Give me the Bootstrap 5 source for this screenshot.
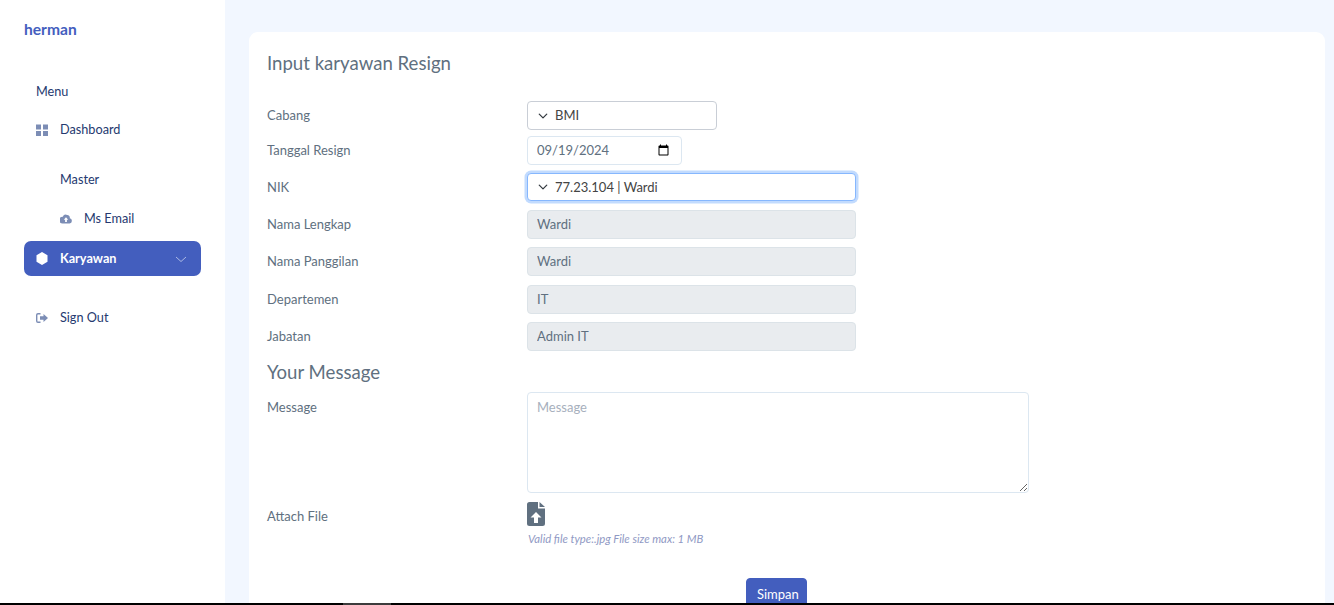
<!DOCTYPE html>
<html lang="en">
<head>
<meta charset="utf-8">
<title>Input karyawan Resign</title>
<link href="https://cdn.jsdelivr.net/npm/bootstrap@5.3.0/dist/css/bootstrap.min.css" rel="stylesheet">
<style>
html,body{height:605px;overflow:hidden}
body{background:#f2f7ff;font-family:"Lato","Open Sans",sans-serif;font-size:13px;color:#607080}
.app-shell{height:605px;overflow:hidden}
.side-panel{width:225px;flex:none;background:#fff;padding:20px 24px 0;height:605px}
.brand-name{font-size:15.6px;font-weight:700;color:#435ebe;line-height:18px;margin-bottom:45px}
.menu-title,.menu-link{color:#25396f;font-size:12.7px;line-height:17px}
.menu-title{padding-left:12px;margin-bottom:21px}
.menu-link{display:flex;align-items:center;gap:12px;padding-left:12px;text-decoration:none;height:17px}
.menu-link svg{width:12px;height:12px;flex:none;fill:#7c8db5}
.gap-dash{margin-bottom:33px}
.menu-sub{padding-left:36px;margin-bottom:22px}
.menu-sub.deep{padding-left:36px;margin-bottom:14px}
.menu-active{height:35px;background:#435ebe;color:#fff;border-radius:7px;font-weight:700;margin-bottom:33px;padding-right:14px}
.menu-active svg{fill:#fff;height:13px}
.menu-active .chev{margin-left:auto;fill:none;stroke:#c7d0ee;stroke-width:.8;width:12px;height:12px}
.work-area{flex:1;padding:32px 9px 0 24px;min-width:0}
.form-panel{background:#fff;border-radius:9px;padding:19px 18px 0;height:640px}
.panel-heading{font-size:18.6px;font-weight:400;color:#607080;line-height:25px;margin:0}
.top-gap{margin-top:25px}
.field-row{margin-bottom:8px}
.field-row.tight{margin-bottom:6px}
.field-row.gap-nine{margin-bottom:9px}
.field-label{line-height:29px;font-size:13px;color:#607080}
.label-low{padding-top:1px}
.field-col{padding-right:18px}
.form-control,.form-select{font-size:13px;color:#607080;height:29px;min-height:0;padding:4px 9px;border:1px solid #dce7f1;border-radius:4px;box-shadow:none}
.form-control:disabled{background:#e9ecef;border-color:#dce3e8;color:#607080;opacity:1;padding:3px 9px 5px}
.form-select{color:#444;padding-left:27px;background-position:left 9px center;background-size:12px 10px;border-color:#c9ced6}
.pick-branch{width:190px}
.pick-date{width:155px;padding-right:9px}
.pick-focus,.pick-focus:focus{border-color:#86b7fe;box-shadow:0 0 0 2.5px #c2dbfe;height:28px}
.heading-two{margin:9px 0 7px}
.message-box{height:101px;padding:5px 9px;resize:vertical}
.message-box.form-control{height:101px}
.message-box::placeholder{color:#a7b0bd}
.file-label{margin-top:9px}
.file-pick{display:block;width:18px;height:24px;fill:#607080;margin-top:9px}
.file-note{font-size:11.3px;font-style:italic;color:#8f99c4;line-height:14px;margin-top:6px;padding-left:1px}
.save-row{margin-top:32px;padding-right:21px}
.btn-save{background:#435ebe;border-color:#435ebe;color:#fff;font-size:13px;padding:5px 10px;border-radius:4px;line-height:20px;width:61px}
.bottom-strip{position:fixed;left:0;right:0;top:603px;height:2px;background:#000}
.bottom-tab{position:absolute;left:343px;width:48px;height:2px;top:0;background:#3c3c3c}
</style>
</head>
<body>
<div class="app-shell d-flex">
  <aside class="side-panel">
    <div class="brand-name">herman</div>
    <div class="menu-title">Menu</div>
    <a class="menu-link gap-dash" href="#"><svg viewBox="0 0 12 12"><rect x="0" y="0.5" width="5" height="5"/><rect x="7" y="0.5" width="5" height="5"/><rect x="0" y="7" width="5" height="5"/><rect x="7" y="7" width="5" height="5"/></svg>Dashboard</a>
    <div class="menu-title menu-sub">Master</div>
    <a class="menu-link menu-sub deep" href="#"><svg viewBox="0 0 16 12"><path d="M13 5.100A3.600 3.600 0 0 0 9.600.6 4.400 4.400 0 0 0 3.700 3 3.400 3.400 0 0 0 3.600 12h9.200A3.500 3.500 0 0 0 13 5.100zM9.200 7v3H6.800V7H5l3-3.200L11 7z"/></svg>Ms Email</a>
    <a class="menu-link menu-active" href="#"><svg viewBox="0 0 12 13"><path d="M6 0l5.500 3.200v6.600L6 13 .5 9.800V3.200z"/></svg>Karyawan<svg class="chev" viewBox="0 0 12 12"><path d="M1 4l5 4.500L11 4"/></svg></a>
    <a class="menu-link" href="#"><svg viewBox="0 0 12 12"><path d="M4.500 1H2a2 2 0 0 0-2 2v6a2 2 0 0 0 2 2h2.500V9.600H2a.6.6 0 0 1-.6-.6V3a.6.6 0 0 1 .6-.6h2.500zM7.500 2l4.500 4-4.500 4V7.700H4V4.300h3.500z"/></svg>Sign Out</a>
  </aside>
  <main class="work-area">
    <div class="form-panel">
      <h1 class="panel-heading">Input karyawan Resign</h1>
      <form class="top-gap">
        <div class="row g-0 field-row tight">
          <label class="col-3 field-label">Cabang</label>
          <div class="col-9"><select class="form-select pick-branch"><option>BMI</option></select></div>
        </div>
        <div class="row g-0 field-row">
          <label class="col-3 field-label">Tanggal Resign</label>
          <div class="col-9"><input type="date" class="form-control pick-date" value="2024-09-19"></div>
        </div>
        <div class="row g-0 field-row">
          <label class="col-3 field-label">NIK</label>
          <div class="col-4 field-col"><select class="form-select pick-focus"><option>77.23.104 | Wardi</option></select></div>
        </div>
        <div class="row g-0 field-row">
          <label class="col-3 field-label">Nama Lengkap</label>
          <div class="col-4 field-col"><input class="form-control" value="Wardi" disabled></div>
        </div>
        <div class="row g-0 field-row gap-nine">
          <label class="col-3 field-label">Nama Panggilan</label>
          <div class="col-4 field-col"><input class="form-control" value="Wardi" disabled></div>
        </div>
        <div class="row g-0 field-row">
          <label class="col-3 field-label">Departemen</label>
          <div class="col-4 field-col"><input class="form-control" value="IT" disabled></div>
        </div>
        <div class="row g-0 field-row">
          <label class="col-3 field-label">Jabatan</label>
          <div class="col-4 field-col"><input class="form-control" value="Admin IT" disabled></div>
        </div>
        <h2 class="panel-heading heading-two">Your Message</h2>
        <div class="row g-0">
          <label class="col-3 field-label label-low">Message</label>
          <div class="col-6 field-col"><textarea class="form-control message-box" placeholder="Message"></textarea></div>
        </div>
        <div class="row g-0">
          <label class="col-3 field-label file-label">Attach File</label>
          <div class="col-9">
            <svg class="file-pick" viewBox="0 0 18 24"><path d="M2.500 0H11v6.500h7V21.500A2.500 2.500 0 0 1 15.500 24h-13A2.500 2.500 0 0 1 0 21.500v-19A2.500 2.500 0 0 1 2.500 0zM12.500 0L18 5h-5.500zM9 10l-5.500 5.500h3.500V21h4v-5.500h3.500z" fill-rule="evenodd"/></svg>
            <div class="file-note">Valid file type:.jpg File size max: 1 MB</div>
          </div>
        </div>
        <div class="text-center save-row"><button type="button" class="btn btn-save">Simpan</button></div>
      </form>
    </div>
  </main>
</div>
<div class="bottom-strip"><div class="bottom-tab"></div></div>
</body>
</html>
